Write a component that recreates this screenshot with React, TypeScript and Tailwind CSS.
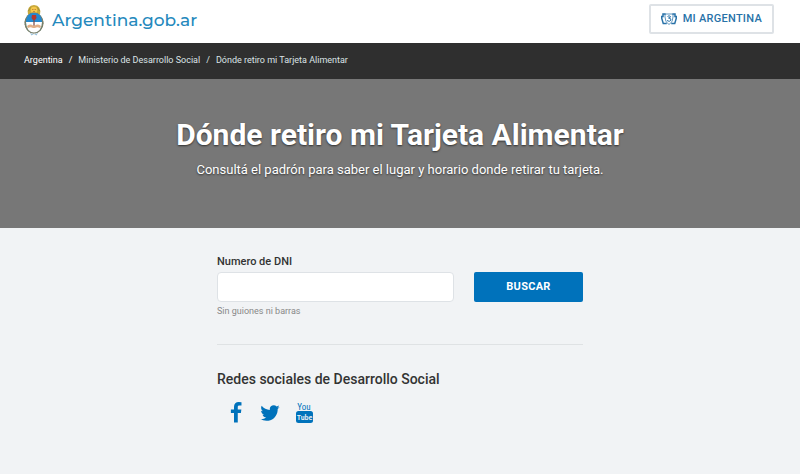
const breadcrumbs = [
  { name: "Argentina", href: "#" },
  { name: "Ministerio de Desarrollo Social", href: "#" },
];

function CoatOfArms() {
  return (
    <svg className="h-[31px] w-5" viewBox="0 0 40 62" aria-hidden="true">
      {/* sun */}
      <path d="M8 19Q5 1 20 0Q35 1 32 19Z" fill="#c9a93a" />
      <path d="M9 12L13 5M31 12L27 5" stroke="#8f8a3a" strokeWidth="1.5" />
      <circle cx="20" cy="10" r="6.500" fill="#f5c84a" />
      <path d="M16 9h3M21 9h3M18 13h4" stroke="#a8632a" strokeWidth="1.2" />
      {/* laurels */}
      <ellipse cx="20" cy="36" rx="19" ry="21" fill="#6d8577" />
      <ellipse cx="20" cy="36" rx="18" ry="20" fill="none" stroke="#8a7a5c" strokeWidth="2" strokeDasharray="3 2" />
      {/* shield */}
      <path d="M4 34Q4 16 20 16Q36 16 36 34Z" fill="#2489cf" />
      <path d="M4 34H36Q35 54 20 55Q5 54 4 34Z" fill="#fff" />
      <path d="M20 25V45" stroke="#7b4b48" strokeWidth="2.5" />
      <path d="M16 20h8l1 6-3 4h-4l-3-4z" fill="#b5382e" />
      <path d="M6 42Q13 37 18 41L22 41Q27 37 34 42L32 46Q26 43 22 46H18Q13 43 8 46Z" fill="#e0ae86" />
      <path d="M12 56Q20 60 28 56L25 61L20 58L15 61Z" fill="#9cc3dc" />
    </svg>
  );
}

function MiArgentinaIcon() {
  return (
    <svg className="h-3 w-4" viewBox="0 0 32 24" fill="none" stroke="#2872a8" strokeWidth="3" aria-hidden="true">
      <path d="M9 2H4v5H1.500v4l3 10h7M23 2h5v5h2.500v4l-3 10h-7" />
      <path d="M8 2h16v6q0 11-8 15Q8 19 8 8z" strokeWidth="1.5" />
      <path d="M13 7q3-3 6 0 0 3-4 3 5 0 5 4-3 5-8 1" strokeWidth="2" />
    </svg>
  );
}

function FacebookIcon() {
  return (
    <svg className="size-[22px]" viewBox="0 0 1792 1792" fill="currentColor" aria-hidden="true">
      <path d="M1343 12v264h-157q-86 0-116 36t-30 108v189h293l-39 296h-254v759h-306v-759h-255v-296h255v-218q0-186 104-288.500t277-102.500q147 0 228 12z" />
    </svg>
  );
}

function TwitterIcon() {
  return (
    <svg className="size-[22px]" viewBox="0 0 1792 1792" fill="currentColor" aria-hidden="true">
      <path d="M1684 408q-67 98-162 167 1 14 1 42 0 130-38 259.500t-115.500 248.500-184.500 210.500-258 146-323 54.500q-271 0-496-145 35 4 78 4 225 0 401-138-105-2-188-64.500t-114-159.500q33 5 61 5 43 0 85-11-112-23-185.500-111.500t-73.500-205.500v-4q68 38 146 41-66-44-105-115t-39-154q0-88 44-163 121 149 294.500 238.500t371.500 99.500q-8-38-8-74 0-134 94.500-228.500t228.500-94.500q140 0 236 102 109-21 205-78-37 115-142 178 93-10 186-50z" />
    </svg>
  );
}

function YoutubeIcon() {
  return (
    <svg className="size-[22px]" viewBox="0 0 22 22" fill="currentColor" fontFamily="'Roboto Condensed', 'Liberation Sans Narrow', sans-serif" textAnchor="middle" aria-hidden="true">
      <text x="11" y="8" fontSize="9">You</text>
      <rect x="3" y="9" width="17" height="12" rx="2.500" />
      <text x="11.500" y="18" fontSize="8" fontWeight="500" fill="#f1f3f5">Tube</text>
    </svg>
  );
}

const socials = [
  { name: "Facebook", href: "#", icon: FacebookIcon },
  { name: "Twitter", href: "#", icon: TwitterIcon },
  { name: "YouTube", href: "#", icon: YoutubeIcon },
];

export default function App() {
  return (
    <div className="min-h-screen bg-[#f1f3f5] font-['Roboto',sans-serif] text-[#333]">
      {/* Header */}
      <header className="flex h-[43px] items-start justify-between bg-white pr-[26px] pl-6">
        <a href="#" className="flex items-center gap-2 pt-1 font-['Montserrat','Inter',sans-serif] text-[17px] leading-8 font-medium text-[#2589bd]">
          <CoatOfArms />
          Argentina.gob.ar
        </a>
        <a
          href="#"
          className="mt-1 flex h-[30px] items-center gap-1.5 rounded-xs border-2 border-[#dee2e6] px-2.5 text-[11px] font-medium tracking-wide text-[#2872a8]"
        >
          <MiArgentinaIcon />
          MI ARGENTINA
        </a>
      </header>

      {/* Breadcrumb */}
      <nav className="flex h-9 items-center bg-[#2f2f2f] px-6 text-[9px] text-[#dce3e6]" aria-label="Breadcrumb">
        <ol className="flex">
          {breadcrumbs.map((item) => (
            <li key={item.name} className="first:text-white">
              <a href={item.href}>{item.name}</a>
              <span className="px-1.5">/</span>
            </li>
          ))}
          <li>Dónde retiro mi Tarjeta Alimentar</li>
        </ol>
      </nav>

      {/* Title */}
      <section className="bg-[#777] px-4 pt-[38px] pb-12 text-center text-white text-shadow-[0_1px_2px_rgb(0_0_0/0.6)]">
        <h1 className="text-3xl leading-9 font-bold">Dónde retiro mi Tarjeta Alimentar</h1>
        <p className="mt-[7px] text-[13px] leading-5">
          Consultá el padrón para saber el lugar y horario donde retirar tu tarjeta.
        </p>
      </section>

      <main className="mx-auto max-w-[366px] pt-6">
        <form>
          <label htmlFor="dni" className="block text-[11px] leading-5 font-medium">
            Numero de DNI
          </label>
          <div className="flex gap-5">
            <input
              id="dni"
              type="text"
              aria-describedby="dni-help"
              className="h-[30px] min-w-0 flex-1 rounded-sm border border-[#dee2e6] bg-white px-2 text-xs"
            />
            <button type="button" className="h-[30px] w-[109px] rounded-xs bg-[#0072bb] text-[11px] font-bold tracking-wide text-white">
              BUSCAR
            </button>
          </div>
          <p id="dni-help" className="text-[9px] leading-[18px] text-[#888]">
            Sin guiones ni barras
          </p>
        </form>

        <hr className="mt-6 border-[#dfe2e4]" />

        {/* Social networks */}
        <section className="pt-6">
          <h2 className="text-[14px] leading-5 font-medium">Redes sociales de Desarrollo Social</h2>
          <ul className="mt-[13px] flex gap-3 pl-2 text-[#0072bb]">
            {socials.map((social) => (
              <li key={social.name}>
                <a href={social.href} aria-label={social.name}>
                  <social.icon />
                </a>
              </li>
            ))}
          </ul>
        </section>
      </main>
    </div>
  );
}
